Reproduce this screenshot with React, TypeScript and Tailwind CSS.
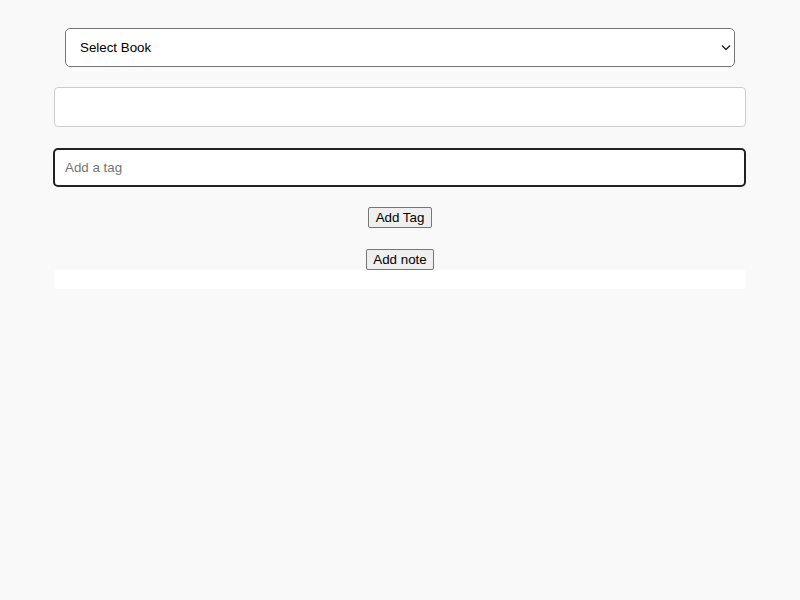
import { useState } from 'react';

export default function App() {
  const [book, setBook] = useState('');
  const [tag, setTag] = useState('');

  return (
    <div className="min-h-screen bg-[#f9f9f9] pt-[28px] font-['Liberation_Sans',Arial,sans-serif]">
      <div className="w-[692px] mx-auto flex flex-col">
        <div className="relative mx-[11px]">
          <select
            value={book}
            onChange={e => setBook(e.target.value)}
            className="appearance-none w-full h-[39px] border border-[#767676] rounded-[5px] bg-white pl-[14px] pr-[24px] text-[13.33px] text-black"
          >
            <option value="">Select Book</option>
          </select>
          {/* native-looking chevron */}
          <svg className="absolute right-[4px] top-[16px] pointer-events-none" width="10" height="7" viewBox="0 0 10 7" fill="none">
            <path d="M1 1.5 L5 5.5 L9 1.5" stroke="#222" strokeWidth="1.4" />
          </svg>
        </div>

        <div className="mt-[20px] h-[40px] border border-[#cccccc] rounded-[4px] bg-white" />

        <input
          value={tag}
          onChange={e => setTag(e.target.value)}
          placeholder="Add a tag"
          className="mt-[21px] -ml-px w-[693px] h-[39px] border-2 border-[#222] rounded-[5px] bg-white px-[10px] text-[13.33px] text-black placeholder:text-[#757575] outline-none"
        />

        <div className="mt-[20px] flex justify-center">
          <button className="h-[21px] px-[7px] border border-[#767676] rounded-[2px] bg-[#efefef] text-[13.33px] text-black leading-none">
            Add Tag
          </button>
        </div>

        <div className="mt-[21px] flex justify-center">
          <button className="h-[21px] px-[6px] border border-[#767676] rounded-[2px] bg-[#efefef] text-[13.33px] text-black leading-none">
            Add note
          </button>
        </div>

        <div className="h-[19px] rounded-[4px] bg-white" />
      </div>
    </div>
  );
}
